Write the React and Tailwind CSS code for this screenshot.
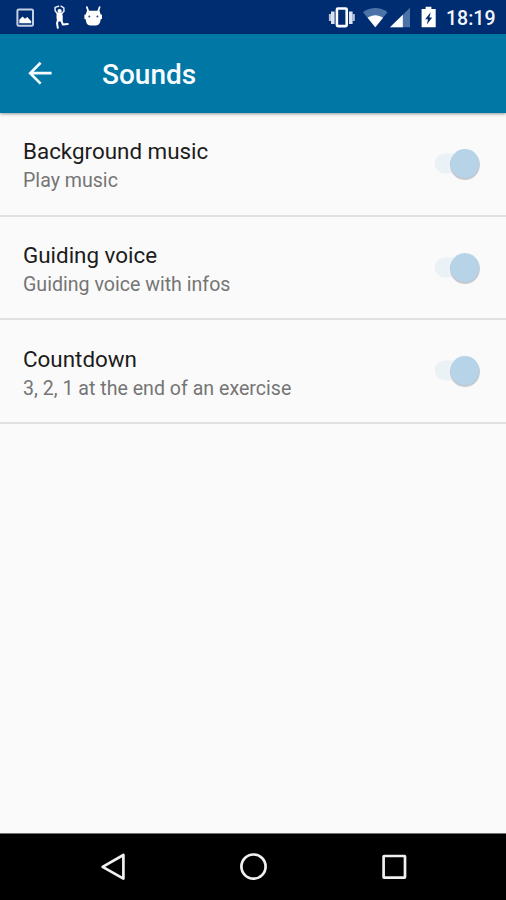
const settings = [
  { title: 'Background music', summary: 'Play music' },
  { title: 'Guiding voice', summary: 'Guiding voice with infos' },
  { title: 'Countdown', summary: '3, 2, 1 at the end of an exercise' },
];

function Toggle() {
  return (
    <svg className="h-[44px] w-[56px] shrink-0" viewBox="430 142.5 56 44" fill="none">
      <rect x="434.5" y="154" width="40" height="20" rx="10" fill="#ebf2f6" />
      <circle cx="464.9" cy="165.8" r="15" fill="#dedee0" />
      <circle cx="464.9" cy="165.1" r="14.8" fill="#bfc6ce" />
      <circle cx="464.9" cy="164" r="14.4" fill="#b7d3e7" />
    </svg>
  );
}

function StatusLeft() {
  return (
    <svg className="h-[34px] w-[120px]" viewBox="0 0 120 34" fill="none">
      <rect x="17.4" y="9.4" width="15.6" height="16.4" rx="1.4" stroke="#c5cfe3" strokeWidth="2" />
      <path d="M19.3 23.2v-3.4l3.2-3.3 2.5 2.3 2.2-1.7 4 4.2v1.9z" fill="#fff" />
      <path d="M58.6 6.2 55 7.4l.2 3.6 2.2 2.6M61 6.2l2.8 1.6.2 3.4-2.6 2.4" stroke="#e4eaf5" strokeWidth="1.5" strokeLinecap="round" strokeLinejoin="round" />
      <circle cx="59.6" cy="11" r="2.1" fill="#fff" />
      <path d="M56.6 12.8h5.6l.6 4.2-.3 4.6-5.4-.1-.6-4z" fill="#fff" />
      <path d="m58 20-1 3.2.8 4.6M61.2 20l1.7 4.6 4.8-.6" stroke="#fff" strokeWidth="2" strokeLinecap="round" strokeLinejoin="round" />
      <path d="m86.9 7.2 1.4 4M99.6 7.2l-1.4 4" stroke="#fff" strokeWidth="1.8" strokeLinecap="round" />
      <path d="M87 10.8h12.5l1.2 3.7 1.3.2v4.2l-1.3.3c-.3 3.8-2 6.2-4.6 6.2h-6c-2.5 0-4.1-2.3-4.4-6.2l-1.3-.3v-4.2l1.3-.2z" fill="#fff" />
      <circle cx="89.3" cy="16.5" r="1" fill="#304a88" />
      <circle cx="97.4" cy="16.5" r="1" fill="#304a88" />
    </svg>
  );
}

function StatusRight() {
  return (
    <svg className="h-[34px] w-[122px]" viewBox="320 0 122 34" fill="none">
      <path d="M330 14v7M353.7 14v7" stroke="#b5c2dc" strokeWidth="2.2" />
      <path d="M332.8 11.5v12.5M350.8 11.5v12.5" stroke="#dce3f0" strokeWidth="3.6" />
      <rect x="336.9" y="8.5" width="9.8" height="17.6" rx="1" stroke="#fff" strokeWidth="2.6" />
      <path d="M363 12.2C370.7 6.6 380 6.6 387.5 12.2L375.3 27.3z" fill="#4b73a7" />
      <path d="M367.6 17.8c4.6-3.5 10.8-3.5 15.4 0l-7.7 9.5z" fill="#fff" />
      <path d="M410 7.8v19.5h-20z" fill="#4b73a7" />
      <path d="M402.8 14.8v12.5H390z" fill="#fff" />
      <path d="M425.6 6.8h5.8v2.3h4.3v18.2h-14.1V9.1h4z" fill="#fff" />
      <path d="m430.7 12.2-5.5 7h2.8l-1.2 5.2 5.4-7h-2.8z" fill="#002c71" />
    </svg>
  );
}

export default function App() {
  return (
    <div className="flex h-[900px] w-[506px] flex-col overflow-hidden bg-[#fafafa] font-['Roboto',sans-serif]">
      <header className="flex h-[34px] shrink-0 items-center justify-between bg-[#002c71]">
        <StatusLeft />
        <div className="flex items-center">
          <StatusRight />
          <span className="w-[64px] pt-[3px] pl-[4px] text-[19.5px] leading-[32px] font-medium text-[#f4f7fc]">18:19</span>
        </div>
      </header>
      <div className="z-10 flex h-[78.7px] shrink-0 items-center bg-[#0077a5] shadow-[0_1px_3px_rgba(0,0,0,0.4)]">
        <svg className="ml-[24px] h-[34px] w-[34px]" viewBox="24 56 34 34" fill="none">
          <path d="M51.6 73.2H30.4M40.6 62.8 30.2 73.2 40.6 83.6" stroke="#f4fafd" strokeWidth="2.7" />
        </svg>
        <h1 className="ml-[44px] pt-[3px] text-[28px] leading-[34px] font-medium text-[#f8fcff]">Sounds</h1>
      </div>
      <main className="flex-1 pt-[0.5px]">
        {settings.map(({ title, summary }) => (
          <section key={title} className="flex h-[103.6px] items-center justify-between border-b-2 border-[#e0e0e0] pr-[20px] pl-[23px]">
            <div className="pt-[3px]">
              <h2 className="text-[22.4px] leading-[31px] text-[#1c1c1c]">{title}</h2>
              <p className="text-[19.6px] leading-[27px] text-[#757575]">{summary}</p>
            </div>
            <Toggle />
          </section>
        ))}
      </main>
      <nav className="flex h-[67px] shrink-0 items-center justify-center border-t border-[#707070] bg-black pl-1">
        <svg className="h-[66px] w-[350px]" viewBox="80 834 350 66" fill="none" stroke="#f0f0f0" strokeWidth="2.7" strokeLinejoin="round">
          <path d="M123.4 855v23.6l-20.8-11.8z" />
          <circle cx="253.5" cy="866.6" r="12.1" />
          <rect x="383.6" y="856" width="21.4" height="21.6" rx=".5" />
        </svg>
      </nav>
    </div>
  );
}
